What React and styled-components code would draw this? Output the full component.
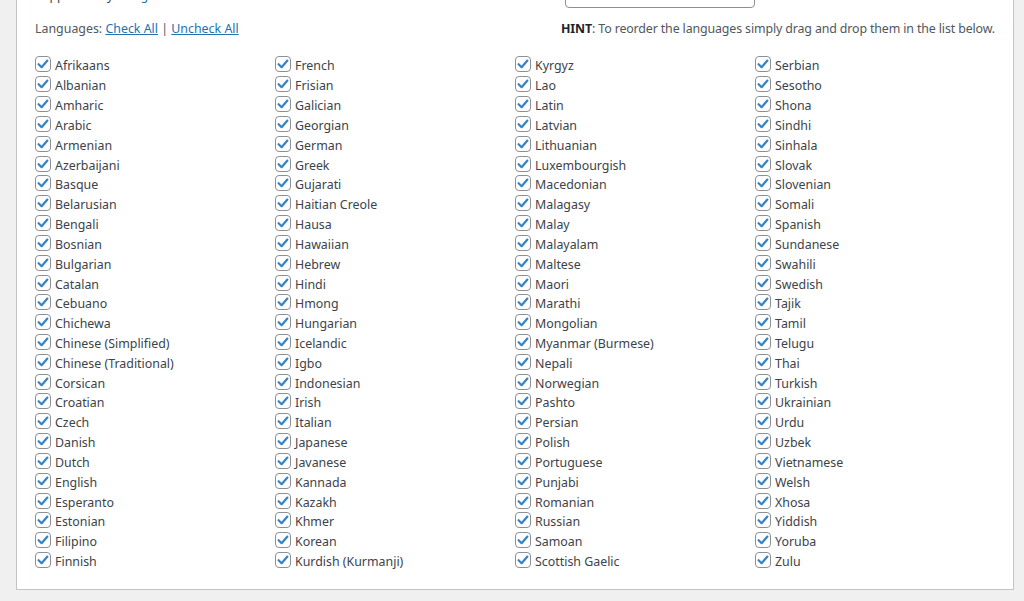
import React from 'react';
import styled, { createGlobalStyle } from 'styled-components';

const GlobalStyle = createGlobalStyle`
  html, body {
    margin: 0;
    padding: 0;
    background: #f0f0f1;
    overflow: hidden;
  }
  body {
    font-family: "Noto Sans", "Open Sans", sans-serif;
    font-size: 12.4px;
    color: #3c434a;
  }
`;

const Page = styled.div`
  padding: 1px 10px 0 16px;
  height: 601px;
  box-sizing: border-box;
`;

const Panel = styled.div`
  margin-top: -25px;
  width: 998px;
  box-sizing: border-box;
  background: #fff;
  border: 1px solid #c3c4c7;
  padding: 0 18px 17px 18px;
`;

const TopRow = styled.div`
  display: flex;
  align-items: flex-start;
  height: 31px;
`;

const TopLabel = styled.div`
  width: 530px;
  line-height: 20px;
  padding-top: 9px;
`;

const TopLink = styled.span`
  color: #2271b1;
`;

const TextInput = styled.div`
  width: 190px;
  height: 31px;
  box-sizing: border-box;
  border: 1px solid #8c8f94;
  border-radius: 4px;
  padding: 2px 8px 0;
  line-height: 22px;
  overflow: hidden;
`;

const LinksRow = styled.div`
  display: flex;
  justify-content: space-between;
  align-items: center;
  margin-top: 11px;
  line-height: 20px;
`;

const Muted = styled.span`
  color: #50575e;
`;

const Link = styled.a`
  color: #2271b1;
  text-decoration: underline;
  cursor: pointer;
`;

const Hint = styled.div`
  color: #50575e;
  letter-spacing: -0.13px;

  b {
    color: #1d2327;
    font-weight: 700;
  }
`;

const Grid = styled.div`
  display: grid;
  grid-template-columns: repeat(4, 240px);
  grid-auto-flow: column;
  grid-template-rows: repeat(26, 19.84px);
  margin-top: 17px;
`;

const Item = styled.label`
  display: flex;
  align-items: center;
  gap: 4px;
  line-height: 19px;
  white-space: nowrap;
`;

const Box = styled.span`
  flex: 0 0 auto;
  width: 16px;
  height: 16px;
  box-sizing: border-box;
  border: 1px solid #8c8f94;
  border-radius: 4px;
  background: #fff;
  display: flex;
  align-items: center;
  justify-content: center;
  margin-top: -3px;
`;

const Name = styled.span`
  color: #3c434a;
`;

const languages = [
  'Afrikaans', 'Albanian', 'Amharic', 'Arabic', 'Armenian', 'Azerbaijani', 'Basque',
  'Belarusian', 'Bengali', 'Bosnian', 'Bulgarian', 'Catalan', 'Cebuano', 'Chichewa',
  'Chinese (Simplified)', 'Chinese (Traditional)', 'Corsican', 'Croatian', 'Czech',
  'Danish', 'Dutch', 'English', 'Esperanto', 'Estonian', 'Filipino', 'Finnish',
  'French', 'Frisian', 'Galician', 'Georgian', 'German', 'Greek', 'Gujarati',
  'Haitian Creole', 'Hausa', 'Hawaiian', 'Hebrew', 'Hindi', 'Hmong', 'Hungarian',
  'Icelandic', 'Igbo', 'Indonesian', 'Irish', 'Italian', 'Japanese', 'Javanese',
  'Kannada', 'Kazakh', 'Khmer', 'Korean', 'Kurdish (Kurmanji)',
  'Kyrgyz', 'Lao', 'Latin', 'Latvian', 'Lithuanian', 'Luxembourgish', 'Macedonian',
  'Malagasy', 'Malay', 'Malayalam', 'Maltese', 'Maori', 'Marathi', 'Mongolian',
  'Myanmar (Burmese)', 'Nepali', 'Norwegian', 'Pashto', 'Persian', 'Polish',
  'Portuguese', 'Punjabi', 'Romanian', 'Russian', 'Samoan', 'Scottish Gaelic',
  'Serbian', 'Sesotho', 'Shona', 'Sindhi', 'Sinhala', 'Slovak', 'Slovenian',
  'Somali', 'Spanish', 'Sundanese', 'Swahili', 'Swedish', 'Tajik', 'Tamil',
  'Telugu', 'Thai', 'Turkish', 'Ukrainian', 'Urdu', 'Uzbek', 'Vietnamese',
  'Welsh', 'Xhosa', 'Yiddish', 'Yoruba', 'Zulu',
];

function CheckBox() {
  return (
    <Box>
      <svg width="14" height="14" viewBox="0 0 14 14">
        <polyline
          points="2.6,7.2 5.6,10.2 11.4,3.6"
          fill="none"
          stroke="#3582c4"
          strokeWidth="2.2"
          strokeLinecap="round"
          strokeLinejoin="round"
        />
      </svg>
    </Box>
  );
}

export default function App() {
  return (
    <Page>
      <GlobalStyle />
      <Panel>
        <TopRow>
          <TopLabel>
            Supported by <TopLink>Google Translate</TopLink>
          </TopLabel>
          <TextInput>my_site_app_key</TextInput>
        </TopRow>
        <LinksRow>
          <Muted>
            Languages: <Link>Check All</Link> | <Link>Uncheck All</Link>
          </Muted>
          <Hint>
            <b>HINT</b>: To reorder the languages simply drag and drop them in the list below.
          </Hint>
        </LinksRow>
        <Grid>
          {languages.map(lang => (
            <Item key={lang}>
              <CheckBox />
              <Name>{lang}</Name>
            </Item>
          ))}
        </Grid>
      </Panel>
    </Page>
  );
}
